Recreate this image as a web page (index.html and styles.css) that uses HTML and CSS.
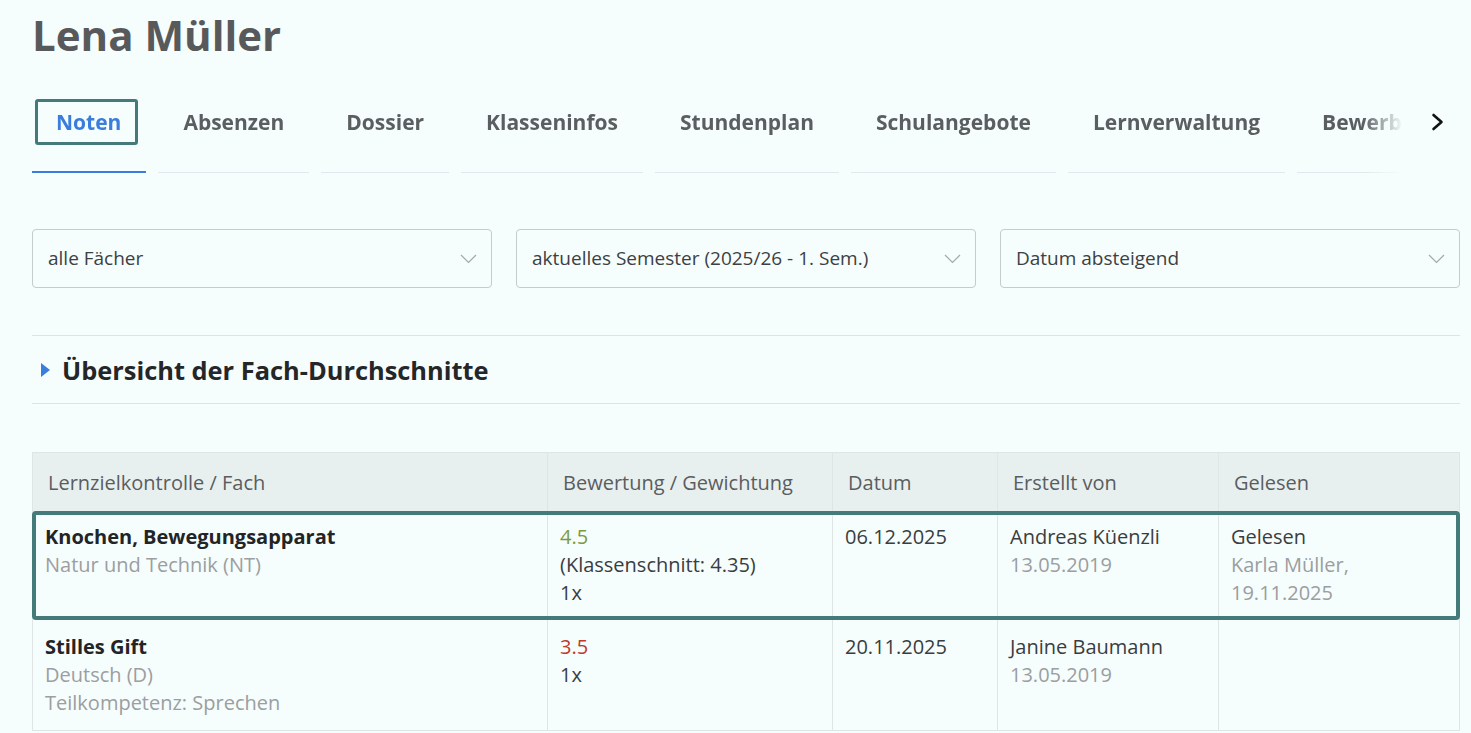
FILE: index.html
```html
<!DOCTYPE html>
<html lang="de">
<head>
<meta charset="utf-8">
<title>Noten – Lena Müller</title>
<link rel="stylesheet" href="styles.css">
</head>
<body>
<main class="page">
  <h1 class="title">Lena Müller</h1>

  <nav class="tabs">
    <ul class="tab-list">
      <li class="tab active"><a class="tab-link focus">Noten</a></li>
      <li class="tab"><a class="tab-link">Absenzen</a></li>
      <li class="tab"><a class="tab-link">Dossier</a></li>
      <li class="tab"><a class="tab-link">Klasseninfos</a></li>
      <li class="tab"><a class="tab-link">Stundenplan</a></li>
      <li class="tab"><a class="tab-link">Schulangebote</a></li>
      <li class="tab"><a class="tab-link">Lernverwaltung</a></li>
      <li class="tab"><a class="tab-link">Bewerbungen</a></li>
    </ul>
    <button class="tab-next" type="button" aria-label="Weiter">
      <svg width="14" height="18" viewBox="0 0 14 18"><path d="M2.5 2 L10.5 9 L2.5 16" fill="none" stroke="#111" stroke-width="2.6" stroke-linecap="round" stroke-linejoin="round"/></svg>
    </button>
  </nav>

  <div class="filters">
    <div class="select"><span>alle Fächer</span><svg class="chev" width="17" height="10" viewBox="0 0 17 10"><path d="M1 1 L8.5 8.5 L16 1" fill="none" stroke="#a3a8ab" stroke-width="1.2"/></svg></div>
    <div class="select"><span>aktuelles Semester (2025/26 - 1. Sem.)</span><svg class="chev" width="17" height="10" viewBox="0 0 17 10"><path d="M1 1 L8.5 8.5 L16 1" fill="none" stroke="#a3a8ab" stroke-width="1.2"/></svg></div>
    <div class="select"><span>Datum absteigend</span><svg class="chev" width="17" height="10" viewBox="0 0 17 10"><path d="M1 1 L8.5 8.5 L16 1" fill="none" stroke="#a3a8ab" stroke-width="1.2"/></svg></div>
  </div>

  <section class="summary">
    <h2 class="summary-title"><span class="caret"></span>Übersicht der Fach-Durchschnitte</h2>
  </section>

  <div class="grades">
    <div class="row head">
      <div class="cell">Lernzielkontrolle / Fach</div>
      <div class="cell">Bewertung / Gewichtung</div>
      <div class="cell">Datum</div>
      <div class="cell">Erstellt von</div>
      <div class="cell">Gelesen</div>
    </div>
    <div class="row body first focused">
      <div class="cell"><div class="main">Knochen, Bewegungsapparat</div><div class="sub">Natur und Technik (NT)</div></div>
      <div class="cell"><div class="good">4.5</div><div>(Klassenschnitt: 4.35)</div><div>1x</div></div>
      <div class="cell"><div>06.12.2025</div></div>
      <div class="cell"><div>Andreas Küenzli</div><div class="sub">13.05.2019</div></div>
      <div class="cell"><div>Gelesen</div><div class="sub">Karla Müller,<br>19.11.2025</div></div>
    </div>
    <div class="row body">
      <div class="cell"><div class="main">Stilles Gift</div><div class="sub">Deutsch (D)</div><div class="sub">Teilkompetenz: Sprechen</div></div>
      <div class="cell"><div class="bad">3.5</div><div>1x</div></div>
      <div class="cell"><div>20.11.2025</div></div>
      <div class="cell"><div>Janine Baumann</div><div class="sub">13.05.2019</div></div>
      <div class="cell"></div>
    </div>
  </div>
</main>
</body>
</html>
```

FILE: styles.css
```css
html, body {
  margin: 0;
  padding: 0;
  background: #f5fdfd;
  overflow: hidden;
}

body {
  font-family: "Open Sans", sans-serif;
  color: #3a3d40;
}

.page {
  padding: 0 11px 0 32px;
}

.title {
  margin: 7px 0 0 0;
  font-size: 42px;
  line-height: 56px;
  font-weight: 700;
  color: #58595b;
}

/* Tabs */
.tabs {
  display: flex;
  align-items: flex-start;
  margin-top: 36px;
}

.tab-list {
  flex: 1;
  display: flex;
  gap: 12px;
  list-style: none;
  margin: 0;
  padding: 0;
  overflow: hidden;
  -webkit-mask-image: linear-gradient(to right, #000 calc(100% - 40px), transparent);
  mask-image: linear-gradient(to right, #000 calc(100% - 40px), transparent);
}

.tab {
  flex: none;
  padding: 0 3px 27px;
  border-bottom: 1px solid #e2e8eb;
}

.tab.active {
  padding: 0 8px 26px 3px;
  border-bottom: 2px solid #3b7ddd;
}

.tab-link {
  display: block;
  padding: 8px 19px;
  border: 3px solid transparent;
  border-radius: 3px;
  font-size: 21px;
  line-height: 24px;
  font-weight: 700;
  color: #5b5e60;
  white-space: nowrap;
}

.tab-link.focus {
  padding: 8px 14px 8px 18px;
  border-color: #447b7a;
  color: #3b7ddd;
}

.tab-next {
  flex: none;
  width: 57px;
  height: 46px;
  padding: 0 0 0 28px;
  border: 0;
  background: transparent;
  display: flex;
  align-items: center;
}

/* Filters */
.filters {
  display: grid;
  grid-template-columns: repeat(3, 1fr);
  gap: 24px;
  margin-top: 56px;
}

.select {
  height: 59px;
  box-sizing: border-box;
  border: 1px solid #c6cbce;
  border-radius: 4px;
  padding: 0 14px 0 15px;
  display: flex;
  align-items: center;
  justify-content: space-between;
  font-size: 19px;
  color: #3d4043;
}

.select span {
  margin-top: -2px;
}

.chev {
  flex: none;
  margin-top: 1px;
}

/* Summary */
.summary {
  margin-top: 47px;
  border-top: 1px solid #dde3e4;
  border-bottom: 1px solid #dde3e4;
  height: 67px;
  display: flex;
  align-items: center;
}

.summary-title {
  margin: 0;
  display: flex;
  align-items: center;
  font-size: 25.4px;
  line-height: 34px;
  font-weight: 700;
  color: #252628;
}

.caret {
  width: 0;
  height: 0;
  border-top: 7.5px solid transparent;
  border-bottom: 7.5px solid transparent;
  border-left: 9px solid #3b7ddd;
  margin: 0 12px 0 9px;
}

/* Grades table */
.grades {
  margin-top: 48px;
  border: 1px solid #dfe5e5;
  border-bottom: 0;
}

.row {
  display: grid;
  grid-template-columns: 514px 285px 165px 221px 241px;
  border-bottom: 1px solid #dfe5e5;
  font-size: 20px;
  line-height: 28px;
}

.cell + .cell {
  border-left: 1px solid #dfe5e5;
}

.head {
  background: #e8f0ef;
  color: #5a5d60;
  border-bottom: 0;
}

.head .cell {
  padding: 16px 16px 15px 15px;
}

.body .cell {
  padding: 14px 12px 13px 12px;
  color: #3a3d40;
}

.body.first .cell {
  padding-top: 11px;
  padding-bottom: 11px;
}

.focused {
  outline: 4px solid #447b7a;
  outline-offset: -3px;
  border-radius: 3px;
}

.main {
  font-weight: 700;
  color: #222426;
}

.sub {
  color: #9c9ea0;
}

.good {
  color: #7d9b3b;
}

.bad {
  color: #c0392b;
}
```
